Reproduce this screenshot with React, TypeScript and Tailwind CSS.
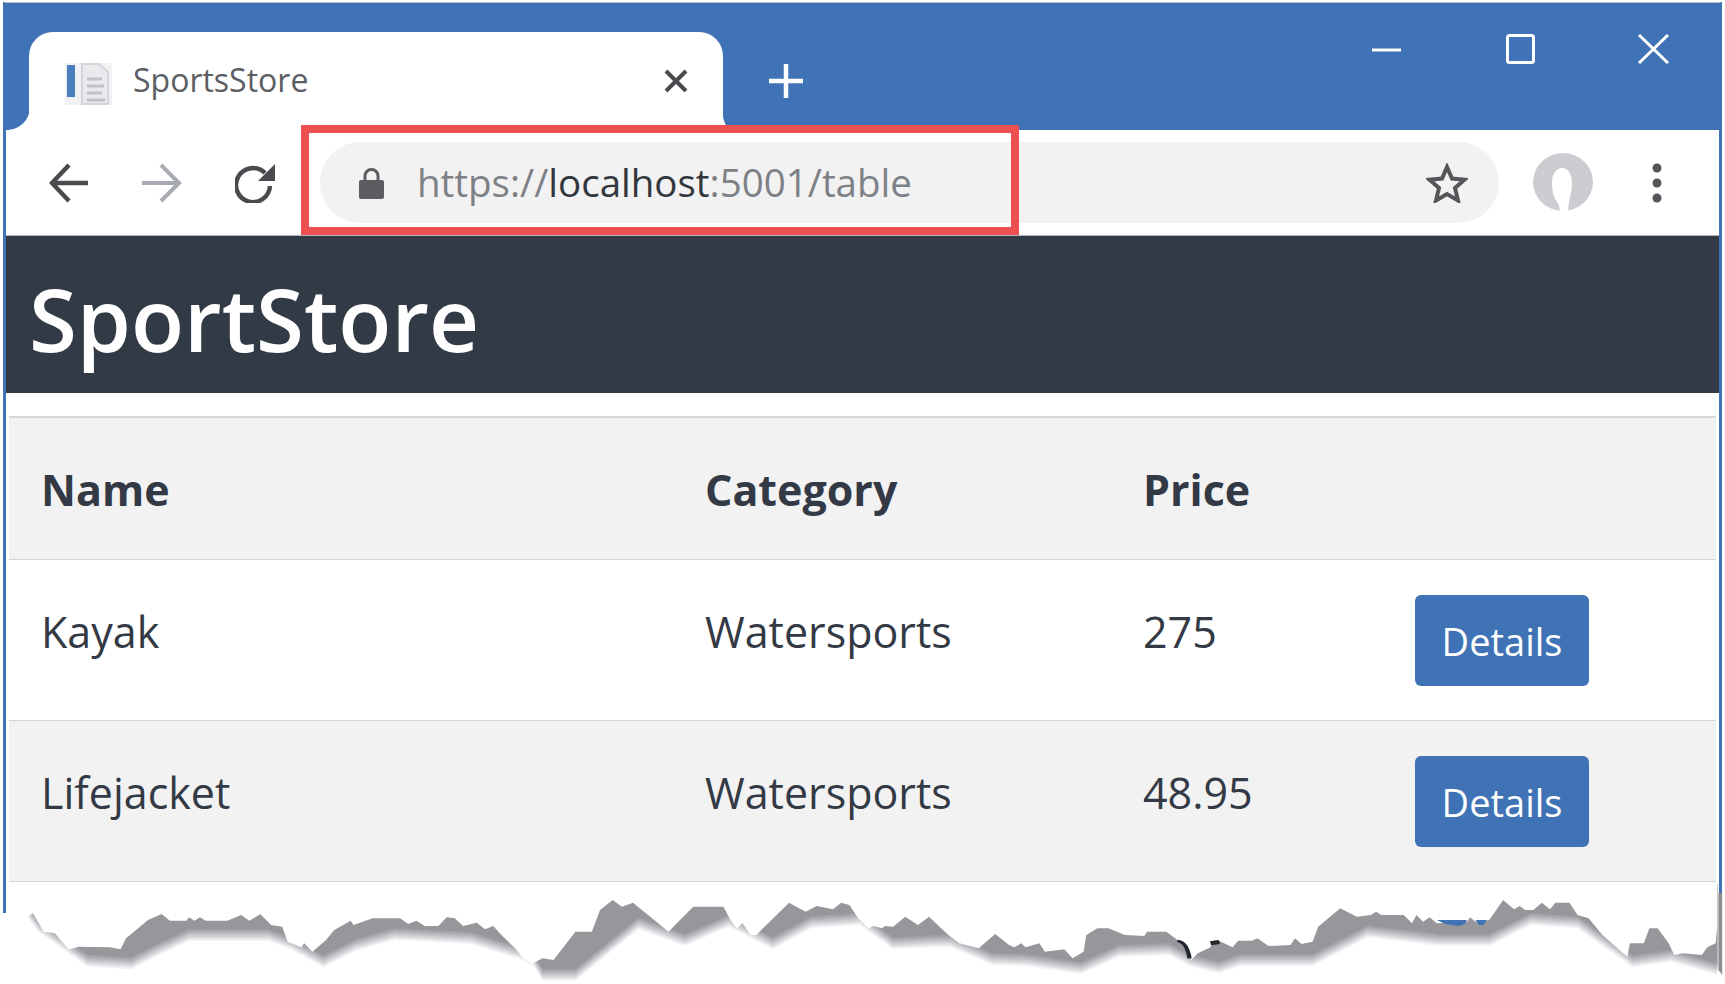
import React from "react";

const font = "font-['Open_Sans','Noto_Sans',sans-serif]";

// outline of the torn paper edge, traced from the reference (x squashed, y is 3x)
const TOP_LEFT =
  "50,170 60,160 80,215 100,220 125,268 145,260 200,262 220,268 230,235 250,208 270,180 295,162 310,182 340,182 345,172 355,182 365,172 375,182 415,182 440,165 455,182 475,163 495,195 515,200 525,245 550,262 555,250 570,275 595,240 610,210 640,182 645,195 680,175 730,175 745,192 760,182 775,198 800,198 815,172 830,175 845,198 870,188 885,208 900,198 915,225 940,265 955,295 970,312 990,295 1010,300 1050,215 1080,215 1095,150 1118,120 1135,140 1155,128 1190,175 1220,215 1235,190 1265,140 1320,140 1335,185 1345,205 1355,190 1370,225 1380,225 1440,128 1470,155 1490,138 1520,148 1535,128 1550,135 1568,180";
const BOTTOM_LEFT =
  "50,170 70,215 125,280 160,320 240,328 290,285 345,243 490,243 530,268 590,322 650,272 720,240 860,252 950,298 975,320 990,362 1050,362 1165,208 1250,258 1330,200 1410,268 1480,205 1568,195";
const TOP_RIGHT =
  "0,180 15,205 25,198 40,205 45,198 60,200 82,170 105,195 125,170 160,225 180,250 215,265 245,222 270,255 280,262 292,250 300,262 325,250 335,275 370,268 385,295 405,275 410,225 430,205 450,205 480,225 515,228 520,215 555,215 575,240 590,255 600,300 612,280 635,262 640,242 650,242 675,262 685,242 710,242 720,235 740,258 780,255 788,235 800,252 820,245 830,200 870,145 900,170 925,165 935,155 945,165 985,165 1000,190 1008,165 1020,185 1032,172 1045,190 1100,185 1105,172 1115,185 1140,180 1165,120 1185,148 1195,138 1205,150 1220,150 1235,128 1250,148 1260,128 1285,128 1300,165 1320,175 1345,225 1390,290 1395,250 1420,250 1430,205 1445,205 1465,250 1475,285 1490,280 1525,285 1535,262 1550,250 1553,200";
const BOTTOM_RIGHT =
  "0,195 60,268 130,262 165,262 240,315 300,318 400,342 470,290 560,285 600,320 650,340 690,318 820,318 920,232 1050,258 1140,258 1215,195 1300,205 1400,322 1470,305 1553,345";

const SHADES = [
  { fill: "#f2f2f4", dy: 0 },
  { fill: "#e0e0e4", dy: -6 },
  { fill: "#cfcfd4", dy: -12 },
  { fill: "#c0c0c5", dy: -18 },
  { fill: "#b0b0b6", dy: -24 },
  { fill: "#a2a2a7", dy: -30 },
  { fill: "#97979b", dy: -36 },
];

const TornEdge = () => (
  <svg
    className="absolute left-0 top-[884px]"
    width="1725"
    height="100"
    viewBox="0 0 1725 100"
  >
    <g transform="translate(860 0) scale(0.552 0.3333) translate(0 -72)">
      {SHADES.map((s) => (
        <polygon
          key={s.fill}
          fill={s.fill}
          transform={`translate(0 ${s.dy})`}
          points={`0,0 ${BOTTOM_RIGHT} 1553,0`}
        />
      ))}
      <polygon fill="#ffffff" points={`-10,0 -10,180 ${TOP_RIGHT} 1553,0`} />
      {/* bits of the page still showing through the tear */}
      <polygon fill="#3f73b5" points="1045,180 1100,180 1095,192 1085,198 1060,192" />
      <polygon fill="#3f73b5" points="1115,180 1135,180 1130,194 1122,196" />
      <path d="M575 243 Q592 245 597 295" fill="none" stroke="#23272e" strokeWidth="8" />
      <polygon fill="#23272e" points="634,244 650,240 652,252 636,256" />
      <polygon fill="#8e8e93" points="1555,100 1562,100 1562,345 1555,330" />
    </g>
    <g transform="scale(0.548 0.3333) translate(0 -72)">
      {SHADES.map((s) => (
        <polygon
          key={s.fill}
          fill={s.fill}
          transform={`translate(0 ${s.dy})`}
          points={`50,0 ${BOTTOM_LEFT} 1570,195 1570,0`}
        />
      ))}
      <polygon fill="#ffffff" points={`40,0 40,170 ${TOP_LEFT} 1590,178 1590,0`} />
    </g>
  </svg>
);

const Favicon = () => (
  <svg width="47" height="44" viewBox="0 0 47 44">
    <rect x="0" y="1" width="47" height="42" fill="#f0f1f3" />
    <rect x="2" y="3" width="8" height="32" fill="#4a7dbb" />
    <path d="M17 2h17l9 8v32H17z" fill="#e9eaec" stroke="#d4d5d9" strokeWidth="2" />
    <path d="M22 17h15M22 24h17M22 31h15M22 38h18" stroke="#c0c2c6" strokeWidth="3" />
  </svg>
);

const TabFoot = ({ side }: { side: "left" | "right" }) =>
  side === "left" ? (
    <svg className="absolute -left-[23px] bottom-0" width="24" height="24" viewBox="0 0 24 24">
      <path d="M24 0v24H0C14 24 24 14 24 0z" fill="#ffffff" />
    </svg>
  ) : (
    <svg className="absolute -right-[7px] bottom-0" width="8" height="24" viewBox="0 0 8 24">
      <path d="M0 0v24h8C3 20 0 12 0 0z" fill="#ffffff" />
    </svg>
  );

const Tab = () => (
  <div className="relative ml-[23px] flex h-[98px] w-[694px] items-start rounded-t-[24px] bg-white pl-[36px] pr-[35px] pt-[30px]">
    <TabFoot side="left" />
    <TabFoot side="right" />
    <Favicon />
    <span className="ml-[21px] -mt-[5px] text-[32px] leading-[46px] text-[#5b5e63]">SportsStore</span>
    <svg className="ml-auto mt-[7px]" width="24" height="24" viewBox="0 0 24 24">
      <path d="M2 2l20 20M22 2L2 22" stroke="#4b4b4f" strokeWidth="4" />
    </svg>
  </div>
);

const WindowControls = () => (
  <div className="ml-auto mr-[50px] mt-[31px] flex items-start self-start">
    <svg width="29" height="30" viewBox="0 0 29 30">
      <path d="M0 16h29" stroke="#ffffff" strokeWidth="3" />
    </svg>
    <svg className="ml-[105px]" width="29" height="30" viewBox="0 0 29 30">
      <rect x="1.5" y="1.5" width="26" height="27" rx="2" fill="none" stroke="#ffffff" strokeWidth="3" />
    </svg>
    <svg className="ml-[103px]" width="31" height="30" viewBox="0 0 31 30">
      <path d="M1 1l29 28M30 1L1 29" stroke="#ffffff" strokeWidth="3" />
    </svg>
  </div>
);

const NavIcons = () => (
  <>
    <svg className="ml-[43px]" width="40" height="40" viewBox="0 0 40 40">
      <path d="M39 20H4M20 2L3 20l17 18" fill="none" stroke="#4a4b4f" strokeWidth="4.5" />
    </svg>
    <svg className="ml-[52px]" width="41" height="40" viewBox="0 0 41 40">
      <path d="M1 20h36M20 2l18 18-18 18" fill="none" stroke="#a8acb2" strokeWidth="4" />
    </svg>
    <svg className="ml-[53px]" width="40" height="40" viewBox="0 0 40 40">
      <path d="M35 23a17 17 0 1 1-5-13" fill="none" stroke="#4a4b4f" strokeWidth="4.5" />
      <path d="M40 1v17H23z" fill="#4a4b4f" />
    </svg>
  </>
);

const AddressBar = () => (
  <div className="ml-[45px] flex h-[81px] w-[1179px] items-center rounded-full bg-[#f2f2f3] pl-[39px] pr-[31px]">
    <svg width="25" height="32" viewBox="0 0 25 32">
      <path d="M6 14V9a6.500 6.500 0 0 1 13 0v5" fill="none" stroke="#5b5c60" strokeWidth="3" />
      <rect x="0" y="13" width="25" height="19" rx="2" fill="#5b5c60" />
    </svg>
    <span className="ml-[33px] -mt-[2px] text-[38.5px] leading-[48px] text-[#7d8186]">
      https://<span className="text-[#33373d]">localhost</span>:5001/table
    </span>
    <svg className="ml-auto" width="42" height="40" viewBox="0 0 42 40">
      <path
        d="M21 4l5 11.500 12.500 1.200-9.500 8.300 3 12.500-11-6.500-11 6.500 3-12.500-9.500-8.300 12.500-1.200z"
        fill="none"
        stroke="#55555a"
        strokeWidth="4"
      />
    </svg>
  </div>
);

const Avatar = () => (
  <svg className="ml-[34px]" width="60" height="60" viewBox="0 0 60 60">
    <ellipse cx="30" cy="29" rx="30" ry="29" fill="#cbcdd1" />
    <path d="M19 30c0-20 20-20 20 0 0 9-3 15-4 29h-8l-1-7-4-6c-2-4-3-10-3-16z" fill="#ffffff" />
  </svg>
);

const Dots = () => (
  <svg className="ml-[59px]" width="10" height="40" viewBox="0 0 10 40">
    <circle cx="5" cy="5" r="4.500" fill="#55565b" />
    <circle cx="5" cy="20" r="4.500" fill="#55565b" />
    <circle cx="5" cy="35" r="4.500" fill="#55565b" />
  </svg>
);

const rows = [
  { name: "Kayak", category: "Watersports", price: "275", striped: false },
  { name: "Lifejacket", category: "Watersports", price: "48.95", striped: true },
];

export default function App() {
  return (
    <div className={`relative h-[984px] w-[1725px] overflow-hidden bg-white ${font}`}>
      <div className="ml-[3px] mr-[3px] mt-[2px] h-[911px] border-x-[3px] border-t border-[#3f73b5] border-t-[#b9bcc2]">
        <div className="flex h-[127px] items-end bg-[#3f73b5]">
          <Tab />
          <svg className="mb-[32px] ml-[46px]" width="34" height="34" viewBox="0 0 34 34">
            <path d="M17 0v34M0 17h34" stroke="#ffffff" strokeWidth="4.500" />
          </svg>
          <WindowControls />
        </div>

        <div className="flex h-[106px] items-center border-b border-[#b4b6bc] bg-white">
          <NavIcons />
          <AddressBar />
          <Avatar />
          <Dots />
        </div>

        <div className="flex h-[157px] items-start bg-[#323a45] pl-[23px] pt-[27px] text-[87px] font-semibold leading-[110px] text-white">
          SportStore
        </div>

        <div className="mx-[3px] mt-[23px] text-[#333a45]">
          <div className="flex h-[144px] border-b border-t-2 border-b-[#d4d4d9] border-t-[#d6d6db] bg-[#f2f2f3] pl-[32px] pt-[47px] text-[43px] font-bold leading-[50px]">
            <div className="w-[664px]">Name</div>
            <div className="w-[438px]">Category</div>
            <div>Price</div>
          </div>
          {rows.map((row) => (
            <div
              key={row.name}
              className={`flex h-[161px] border-b border-[#d4d4d9] pl-[32px] text-[43px] leading-[50px] ${
                row.striped ? "bg-[#f2f2f3]" : "bg-white"
              }`}
            >
              <div className="w-[664px] pt-[47px]">{row.name}</div>
              <div className="w-[438px] pt-[47px]">{row.category}</div>
              <div className="w-[272px] pt-[47px]">{row.price}</div>
              <div className="pt-[35px]">
                <button className="h-[91px] w-[174px] rounded-[6px] bg-[#3f73b5] pt-[1px] text-[38px] text-white">
                  Details
                </button>
              </div>
            </div>
          ))}
        </div>
      </div>

      {/* red annotation box from the book figure */}
      <div className="absolute left-[301px] top-[125px] h-[110px] w-[718px] border-[8px] border-[#ec5050]" />

      <TornEdge />
    </div>
  );
}
